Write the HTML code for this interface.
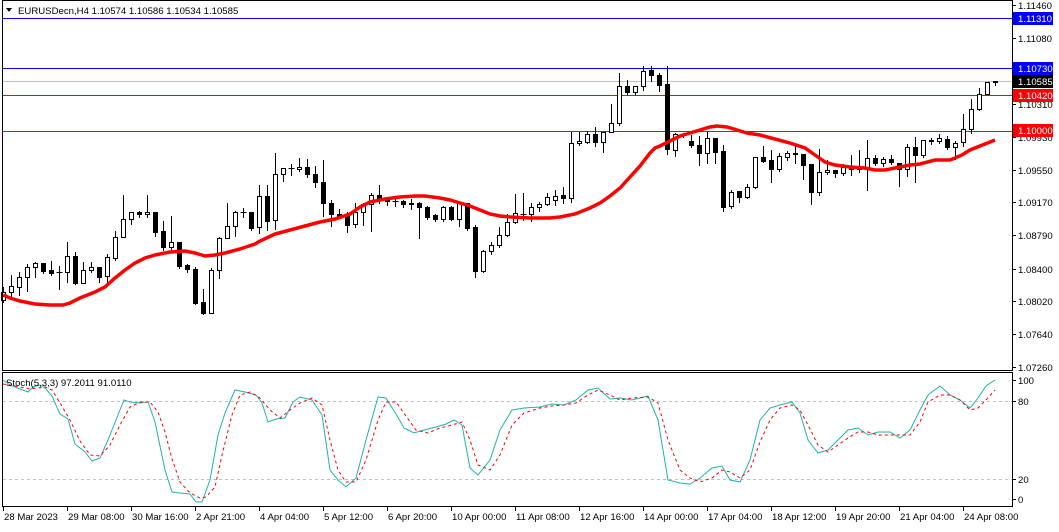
<!DOCTYPE html>
<html><head><meta charset="utf-8">
<style>
html,body{margin:0;padding:0;background:#fff;}
body{width:1059px;height:527px;overflow:hidden;font-family:"Liberation Sans",sans-serif;}
svg text{font-family:"Liberation Sans",sans-serif;font-size:9.6px;fill:#000;}
</style></head>
<body>
<svg id="c" width="1059" height="527" xmlns="http://www.w3.org/2000/svg" shape-rendering="crispEdges">
<rect x="0" y="0" width="1059" height="527" fill="#fff"/>
<line x1="3" y1="18.5" x2="1013" y2="18.5" stroke="#0000ff"/>
<line x1="3" y1="68.5" x2="1013" y2="68.5" stroke="#0000ff"/>
<line x1="3" y1="81.5" x2="1013" y2="81.5" stroke="#c0c0c0"/>
<line x1="3" y1="95.5" x2="1013" y2="95.5" stroke="#ff0000"/>
<line x1="3" y1="131.5" x2="1013" y2="131.5" stroke="#ff0000"/>
<g id="candles"></g>
<polyline id="ma" fill="none" stroke="#ff0000" stroke-width="3.5" shape-rendering="auto" points="3,295 10,298 20,301 35,304 50,305 63,305 70,303 80,298 95,292 105,287 115,278 125,270 135,263 145,258 155,255 170,252 185,251 195,253 205,256 215,255 225,253 240,249 255,244 260,241 275,234 290,230 305,226 320,222 335,219 350,214 360,207 370,202 385,199 400,197 415,196 425,196 440,198 450,200 460,203 470,206 480,210 490,214 500,216 510,217 530,218 550,218 560,217 575,214 590,208 600,203 610,196 620,188 630,177 640,166 650,153 655,148 660,146 670,141 680,136 690,133 700,130 710,127 717,126 727,127 737,130 747,133 760,135 775,139 790,143 805,148 815,155 825,162 835,165 850,167 865,168 875,170 885,170 900,167 910,165 920,164 935,160 950,160 955,158 962,155 970,150 985,144 995,140"/>
<rect x="2.5" y="0.5" width="1010" height="370" fill="none" stroke="#000"/>
<rect x="2.5" y="372.5" width="1010" height="134" fill="none" stroke="#000"/>
<line x1="3" y1="401.5" x2="1012" y2="401.5" stroke="#c0c0c0" stroke-dasharray="3,3"/>
<line x1="3" y1="479.5" x2="1012" y2="479.5" stroke="#c0c0c0" stroke-dasharray="3,3"/>
<polyline fill="none" stroke="#20b2aa" stroke-width="1" shape-rendering="auto" points="3,380 10,385 20,389 28,392 33,387 40,385 45,388 52,396 60,414 68,419 75,444 85,452 92,461 100,458 108,440 116,420 124,400 130,402 140,403 148,402 155,422 165,470 172,492 180,493 190,494 196,502 202,502 210,480 218,435 225,413 235,390 245,392 256,395 262,403 268,422 276,419 285,418 293,402 300,397 312,400 322,415 330,470 338,480 346,487 356,478 366,440 378,397 386,398 396,414 404,428 414,433 424,430 436,427 446,424 454,420 462,425 470,468 478,475 490,460 500,430 512,410 524,408 540,407 552,404 564,405 576,400 588,390 598,388 610,399 620,398 632,400 648,396 658,420 668,480 680,483 690,484 700,478 712,468 722,466 730,480 740,482 750,460 760,420 770,408 780,405 792,402 800,413 808,440 818,453 828,450 838,440 848,430 858,428 868,435 878,432 890,432 900,438 910,430 920,410 928,395 940,386 950,395 960,400 970,408 978,398 986,386 995,380"/>
<polyline fill="none" stroke="#ff0000" stroke-width="1" stroke-dasharray="3,3" shape-rendering="auto" points="3,384 15,386 30,389 45,387 52,390 60,403 70,420 80,441 90,455 100,456 110,445 120,425 130,407 140,402 150,402 158,412 165,432 172,459 180,482 190,493 200,498 206,497 215,487 222,455 232,415 240,395 250,392 260,398 270,410 280,418 290,410 300,403 312,398 322,405 330,440 338,470 346,482 356,482 366,460 378,420 386,402 396,402 406,416 416,430 428,433 440,428 452,425 462,422 470,440 478,465 490,470 500,455 512,425 524,413 540,408 552,406 564,405 576,403 588,395 598,390 610,395 620,400 632,398 648,397 658,403 668,440 680,470 690,478 700,482 712,478 722,470 730,472 740,478 750,470 760,442 770,420 780,408 792,405 800,410 808,425 818,445 828,452 838,445 848,438 858,432 868,432 878,435 890,435 900,435 910,435 920,422 928,402 940,395 950,395 960,400 970,410 978,408 986,400 995,390"/>
<path d="M6,8 L12,8 L9,12 Z" fill="#000"/>
<text x="18" y="14">EURUSDecn,H4  1.10574 1.10586 1.10534 1.10585</text>
<text x="6" y="386">Stoch(5,3,3) 97.2011 91.0110</text>
<g id="axis"></g>
<rect x="1013" y="12" width="40" height="13" fill="#0000ff"/>
<text x="1018" y="22" style="fill:#fff">1.11310</text>
<rect x="1013" y="62" width="40" height="13" fill="#0000ff"/>
<text x="1018" y="72" style="fill:#fff">1.10730</text>
<rect x="1013" y="75" width="40" height="13" fill="#000"/>
<text x="1018" y="85" style="fill:#fff">1.10585</text>
<rect x="1013" y="89" width="40" height="13" fill="#ff0000"/>
<text x="1018" y="99" style="fill:#fff">1.10420</text>
<rect x="1013" y="124" width="40" height="13" fill="#ff0000"/>
<text x="1018" y="134" style="fill:#fff">1.10000</text>
</svg>
<script>
var D=[[292,300,'w',287,302],[286,292,'w',275,297],[277,287,'w',272,295],[267,277,'w',264,291],[263,267,'w',262,277],[263,271,'b',263,273],[270,273,'b',261,275],[272,272,'d',266,289],[256,272,'w',242,282],[256,283,'b',252,284],[270,283,'w',262,283],[267,270,'w',262,272],[267,277,'b',267,282],[257,276,'w',254,285],[237,258,'w',231,260],[219,237,'w',195,237],[212,219,'w',212,224],[212,214,'b',211,217],[212,214,'w',195,217],[212,232,'b',212,236],[231,247,'b',221,250],[242,247,'w',216,250],[242,266,'b',242,268],[265,269,'b',264,272],[269,303,'b',267,304],[302,313,'b',289,314],[270,313,'w',268,313],[238,270,'w',237,278],[226,238,'w',203,238],[212,226,'w',211,236],[212,212,'d',208,217],[212,228,'b',212,230],[196,227,'w',185,233],[196,221,'b',185,230],[174,220,'w',153,229],[168,174,'w',168,181],[168,168,'d',164,175],[167,169,'w',158,171],[167,174,'b',159,177],[174,182,'b',166,187],[182,203,'b',160,216],[203,214,'b',200,226],[214,216,'b',209,218],[216,225,'b',212,232],[212,224,'w',203,227],[204,212,'w',203,225],[195,204,'w',193,231],[195,199,'b',185,203],[199,201,'b',198,205],[201,201,'d',197,206],[201,204,'b',200,207],[203,204,'b',199,209],[203,207,'b',202,238],[207,217,'b',206,219],[215,219,'b',214,221],[207,219,'w',206,221],[207,219,'b',206,220],[203,219,'w',203,226],[203,228,'b',203,230],[227,271,'b',225,277],[251,271,'w',250,272],[245,251,'w',242,254],[235,245,'w',227,247],[222,235,'w',214,236],[213,222,'w',194,223],[214,214,'d',193,220],[207,214,'w',203,221],[204,207,'w',202,211],[197,204,'w',193,205],[196,200,'w',190,205],[195,198,'b',187,203],[143,198,'w',132,202],[141,143,'w',132,145],[134,142,'w',131,143],[134,142,'b',127,146],[132,142,'w',132,152],[123,132,'w',104,132],[86,123,'w',73,125],[86,92,'b',80,94],[86,92,'w',86,94],[71,86,'w',66,90],[70,75,'b',66,81],[75,85,'b',73,91],[84,149,'b',66,154],[134,150,'w',133,156],[135,135,'d',133,137],[141,145,'b',135,147],[145,153,'b',136,165],[138,153,'w',132,163],[138,152,'b',138,163],[151,207,'b',145,211],[192,206,'w',190,208],[191,197,'b',191,202],[187,197,'w',184,198],[157,187,'w',157,188],[157,161,'b',146,162],[160,169,'b',150,182],[156,169,'w',153,171],[153,157,'w',151,160],[153,154,'b',145,163],[154,165,'b',154,179],[164,192,'b',164,204],[172,192,'w',149,195],[170,172,'w',160,174],[170,173,'b',170,177],[167,173,'w',164,175],[166,169,'b',155,175],[166,169,'b',150,172],[158,169,'w',140,190],[158,163,'b',155,165],[159,163,'w',157,166],[159,162,'b',155,164],[163,169,'b',163,186],[147,169,'w',144,176],[147,155,'b',137,182],[140,155,'w',140,157],[140,141,'b',138,144],[138,141,'w',134,143],[139,147,'b',136,149],[143,147,'w',141,159],[129,142,'w',114,146],[109,129,'w',99,133],[94,109,'w',88,110],[82,94,'w',82,94],[81,82,'b',81,85]];
var s='';
for(var i=0;i<D.length;i++){var d=D[i],cx=3+8*i+0.5,t=d[0],b=d[1];
s+='<line x1="'+cx+'" y1="'+d[3]+'" x2="'+cx+'" y2="'+(d[4]+1)+'" stroke="#000"/>';
if(d[2]=='d'){s+='<line x1="'+(cx-3)+'" y1="'+(t+0.5)+'" x2="'+(cx+3)+'" y2="'+(t+0.5)+'" stroke="#000"/>';}
else{var h=Math.max(b-t,1);s+='<rect x="'+(cx-2)+'" y="'+(t+0.5)+'" width="4" height="'+h+'" fill="'+(d[2]=='w'?'#fff':'#000')+'" stroke="#000"/>';}}
document.getElementById('candles').innerHTML=s;
var a='';
var P=[[1.1146,'1.11460'],[1.1108,'1.11080'],[1.1031,'1.10310'],[1.0993,'1.09930'],[1.0955,'1.09550'],[1.0917,'1.09170'],[1.0879,'1.08790'],[1.0840,'1.08400'],[1.0802,'1.08020'],[1.0764,'1.07640'],[1.0726,'1.07260']];
P.forEach(function(p){var y=Math.round(5+(1.1146-p[0])*8619);a+='<line x1="1012" y1="'+(y+0.5)+'" x2="1016" y2="'+(y+0.5)+'" stroke="#000"/><text x="1018" y="'+(y+4)+'">'+p[1]+'</text>';});
[[380,'100'],[401,'80'],[479,'20'],[499,'0']].forEach(function(p){a+='<line x1="1012" y1="'+(p[0]+0.5)+'" x2="1016" y2="'+(p[0]+0.5)+'" stroke="#000"/><text x="1018" y="'+(p[0]+4)+'">'+p[1]+'</text>';});
var T=['28 Mar 2023','29 Mar 08:00','30 Mar 16:00','2 Apr 21:00','4 Apr 04:00','5 Apr 12:00','6 Apr 20:00','10 Apr 00:00','11 Apr 08:00','12 Apr 16:00','14 Apr 00:00','17 Apr 04:00','18 Apr 12:00','19 Apr 20:00','21 Apr 04:00','24 Apr 08:00'];
T.forEach(function(t,k){var x=3+64*k;a+='<line x1="'+(x+0.5)+'" y1="507" x2="'+(x+0.5)+'" y2="511" stroke="#000"/><text x="'+(x+1)+'" y="520">'+t+'</text>';});
document.getElementById('axis').innerHTML=a;
</script>
</body></html>
